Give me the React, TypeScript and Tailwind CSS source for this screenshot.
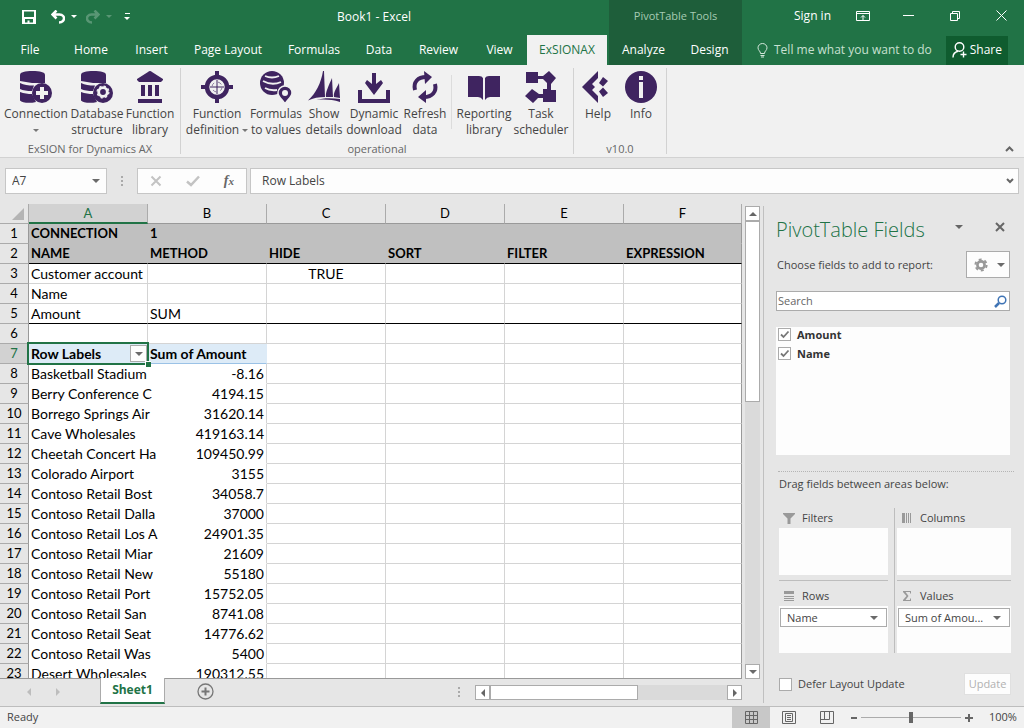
import React from 'react';

const Caret = ({ className = 'border-t-[#6a6a6a]' }: { className?: string }) => (
  <span className={`inline-block shrink-0 w-0 h-0 border-x-4 border-x-transparent border-t-4 ${className}`} />
);

const Stack = () => (
  <>
    <path d="M0 4C0 1 5 0 12.500 0S25 1 25 4v8H12L0 10z" fill="#3f2460" />
    <path d="M0 12c4 2 8 2.500 14 2.500L12 20C7 20 3 19.500 0 18z" fill="#3f2460" />
    <path d="M0 21c4 1.500 8 2 12 2l4 8c-6 1.500-14 1-16-1.500z" fill="#3f2460" />
    <circle cx="22" cy="22" r="10" fill="#3f2460" />
  </>
);

const icons: Record<string, React.ReactNode> = {
  connection: (
    <>
      <Stack />
      <path d="M20 16h4v4h4v4h-4v4h-4v-4h-4v-4h4z" fill="#f1f1f1" />
    </>
  ),
  database: (
    <>
      <Stack />
      <circle cx="22" cy="21" r="4.300" fill="none" stroke="#f1f1f1" strokeWidth="2.800" />
      <circle cx="22" cy="21" r="5.900" fill="none" stroke="#f1f1f1" strokeWidth="1.200" strokeDasharray="2.300 2.330" />
    </>
  ),
  temple: (
    <path
      d="M14 1q2-2 4 0l11 7v1l-2 2H5L3 9V8zM7 14h4v11H7zM14 14h4v11h-4zM21 14h4v11h-4zM4 28h24v4H4z"
      fill="#3f2460"
    />
  ),
  target: (
    <>
      <circle cx="16" cy="16" r="10" fill="#f1f1f1" stroke="#3f2460" strokeWidth="4.500" />
      <path d="M14 0h4v7h-4zM14 25h4v7h-4zM0 14h7v4H0zM25 14h7v4h-7z" fill="#3f2460" />
      <path d="M16 9v14M9 16h14" stroke="#3f2460" strokeWidth="1" />
      <circle cx="16" cy="16" r="5" fill="none" stroke="#8c7d9e" strokeWidth="1" strokeDasharray="4 4" />
    </>
  ),
  globe: (
    <>
      <circle cx="12" cy="12" r="12" fill="#3f2460" />
      <path d="M5 5q7 3 14 0M3 10q9 5 18 1M5 17q5 3 12 2" fill="none" stroke="#f1f1f1" strokeWidth="1.800" />
      <path
        d="M25 15a7 7 0 0 0-7 7c0 4 5 7 7 11 2-4 7-7 7-11a7 7 0 0 0-7-7z"
        fill="#3f2460"
        stroke="#f1f1f1"
        strokeWidth="1.500"
      />
      <circle cx="25" cy="22" r="3" fill="#f1f1f1" />
    </>
  ),
  sails: (
    <path
      d="M15 0h1l1 26C11 26 5 27 0 29.500 8 22 13 12 15 0zM24 7l1 19-7 0C17 22 21 14 24 7zM31 12l1 15-6-1C25 21 29 17 31 12zM8 29c8-2.500 16-2 24-1v3c-8-2.500-16-3-24-2z"
      fill="#3f2460"
    />
  ),
  download: (
    <path d="M14 2h4v11l5-4 2 3-9 12-9-12 2-3 5 4zM0 19h4v9h24v-9h4v13H0z" fill="#3f2460" />
  ),
  refresh: (
    <>
      <path d="M6 19C4 11 9 6 17 6M26 13c2 8-3 13-11 13" fill="none" stroke="#3f2460" strokeWidth="4" />
      <path d="M15 0l8 6-7 7zM17 19l-8 7 8 6z" fill="#3f2460" />
    </>
  ),
  book: (
    <path d="M0 5h11q3 0 4 2v22q-2-3-5-3H0zM32 5H21q-3 0-4 2v22q2-3 5-3h10z" fill="#3f2460" />
  ),
  tasks: (
    <path
      d="M1 1h12v4h5l6-5 7 7-5 6v6h5v12H18v-4h-5l-5 5-8-7 7-7 7 5h4v-5h4v-6l-4-4h-5v4H1z"
      fill="#3f2460"
    />
  ),
  help: (
    <path
      d="M16 0v7l-6 6 3 3-3 3 6 6v7L0 16zM21 6l5 4-5 5.500-4-3.500zM21 16.500l5 5.500-5 4-4-5.500z"
      fill="#3f2460"
    />
  ),
  info: (
    <>
      <circle cx="16" cy="16" r="16" fill="#3f2460" />
      <path d="M14 5h4v4h-4zM14 11h4v16h-4z" fill="#f1f1f1" />
    </>
  ),
};

interface RibbonButtonProps {
  icon: string;
  lines: string[];
  className: string;
  caret?: boolean;
}

const RibbonButton = ({ icon, lines, className, caret }: RibbonButtonProps) => (
  <button className={`flex flex-col items-center shrink-0 whitespace-nowrap text-xs leading-4 text-[#444] ${className}`}>
    <svg viewBox="0 0 32 32" className="w-8 h-8 mb-[3px]">{icons[icon]}</svg>
    <span>{lines[0]}</span>
    <span className="flex items-center gap-[3px] h-4">
      {lines[1]}
      {caret && <span className="w-0 h-0 border-x-3 border-x-transparent border-t-3 border-t-[#777]" />}
    </span>
  </button>
);

const RibbonGroup = ({ label, children, className }: { label: string, children: React.ReactNode, className: string }) => (
  <div className={`flex flex-col justify-between my-[3px] pt-[3px] border-r border-[#d2d2d2] ${className}`}>
    <div className="flex">{children}</div>
    <div className="text-center text-[11px] leading-[10px] text-[#666]">{label}</div>
  </div>
);

const tabs = [
  { name: 'File', width: 'w-[60px]' },
  { name: 'Home', width: 'w-[62px]' },
  { name: 'Insert', width: 'w-[59px]' },
  { name: 'Page Layout', width: 'w-[94px]' },
  { name: 'Formulas', width: 'w-[78px]' },
  { name: 'Data', width: 'w-[52px]' },
  { name: 'Review', width: 'w-[67px]' },
  { name: 'View', width: 'w-[55px]' },
];

const TitleBar = () => (
  <header className="flex h-[65px] shrink-0 bg-[#217346] text-white text-xs whitespace-nowrap">
    <div className="flex flex-col w-[609px] shrink-0">
      <div className="flex items-center h-[35px] pb-0.5 pl-[22px]">
        <button aria-label="Save">
          <svg viewBox="0 0 14 14" className="w-3.5 h-3.5">
            <path d="M0 0h14v14H0zM2 1.500V7h10V1.500zM3 9v3.500h2.500V10.500h2v2H11V9z" fill="#fff" fillRule="evenodd" />
          </svg>
        </button>
        <button aria-label="Undo" className="flex items-center gap-1.5 ml-[15px]">
          <svg viewBox="0 0 14 14" className="w-3.5 h-3.5">
            <path d="M5.500.5L1.500 4.500l4 4M2 4.500h6.500C12 4.500 13 7 13 8.500S11.500 12.500 8 12.500" fill="none" stroke="#fff" strokeWidth="2.500" />
          </svg>
          <span className="w-0 h-0 border-x-3 border-x-transparent border-t-3 border-t-white" />
        </button>
        <button aria-label="Redo" className="flex items-center gap-1.5 ml-[9px] opacity-25">
          <svg viewBox="0 0 14 14" className="w-3.5 h-3.5">
            <path d="M8.500.5l4 4-4 4M12 4.500H5.500C2 4.500 1 7 1 8.500S2.500 12.500 6 12.500" fill="none" stroke="#fff" strokeWidth="2.500" />
          </svg>
          <span className="w-0 h-0 border-x-3 border-x-transparent border-t-3 border-t-white" />
        </button>
        <button aria-label="Customize toolbar" className="flex flex-col items-center gap-[3px] ml-3">
          <span className="w-[5px] h-px bg-white" />
          <span className="w-0 h-0 border-x-3 border-x-transparent border-t-3 border-t-white" />
        </button>
        <h1 className="w-[200px] ml-auto mr-[135px] text-center">Book1 - Excel</h1>
      </div>
      <nav className="flex h-[30px]">
        {tabs.map(tab => (
          <button key={tab.name} className={`shrink-0 ${tab.width}`}>{tab.name}</button>
        ))}
        <button className="w-20 shrink-0 bg-[#f1f1f1] text-[#217346]">ExSIONAX</button>
      </nav>
    </div>
    <div className="flex flex-col w-[133px] shrink-0 bg-[#1e5e3a]">
      <div className="flex items-center justify-center h-[35px] pb-0.5 text-[11px] text-[#a6cbb3]">PivotTable Tools</div>
      <div className="flex h-[30px] pl-px">
        <button className="w-[67px]">Analyze</button>
        <button className="w-[65px]">Design</button>
      </div>
    </div>
    <div className="flex flex-col flex-1 min-w-0">
      <div className="flex items-center justify-end h-[35px] pb-1 pr-[17px]">
        <button className="mr-[25px]">Sign in</button>
        <button aria-label="Ribbon display options" className="mr-[33px]">
          <svg viewBox="0 0 14 12" className="w-3.5 h-3" fill="none" stroke="#fff">
            <path d="M.5 1.500h13v9H.5zM.5 3.500h13M7 10V5.500M5 7.500l2-2 2 2" />
          </svg>
        </button>
        <button aria-label="Minimize" className="w-[11px] h-px mr-9 bg-white" />
        <button aria-label="Restore" className="mr-9">
          <svg viewBox="0 0 10 10" className="w-2.5 h-2.5" fill="none" stroke="#fff">
            <path d="M.5 2.500h7v7h-7zM2.500 2.500v-2h7v7h-2" />
          </svg>
        </button>
        <button aria-label="Close">
          <svg viewBox="0 0 11 11" className="w-[11px] h-[11px]" stroke="#fff">
            <path d="M.5.5l10 10M10.500.5l-10 10" />
          </svg>
        </button>
      </div>
      <div className="flex items-center h-[30px] pl-[15px] pr-4">
        <svg viewBox="0 0 11 15" className="w-[11px] h-[15px] mr-1.5" fill="none" stroke="#d5e8dc">
          <path d="M3.500 10.500C3.500 8 1 7.500 1 4.800a4.500 4.300 0 0 1 9 0C10 7.500 7.500 8 7.500 10.500zM3.500 12.500h4M4 14h3" />
        </svg>
        <button className="text-[#c8e0d1]">Tell me what you want to do</button>
        <button className="flex items-center gap-[3px] h-[29px] px-1.5 ml-auto bg-[#0f5c2f]">
          <svg viewBox="0 0 15 16" className="w-[15px] h-4" fill="none" stroke="#fff" strokeWidth="1.400">
            <circle cx="7.500" cy="5" r="4.300" />
            <path d="M1 15.500C1 12 3 10 6 9.300M11.500 9.500v6M8.500 12.500h6" />
          </svg>
          Share
        </button>
      </div>
    </div>
  </header>
);

const Ribbon = () => (
  <section className="flex h-[93px] shrink-0 bg-[#f1f1f1] border-b border-[#d2d2d2]">
    <RibbonGroup label="ExSION for Dynamics AX" className="w-[181px]">
      <RibbonButton icon="connection" lines={['Connection', '']} className="w-16 ml-1" caret />
      <RibbonButton icon="database" lines={['Database', 'structure']} className="w-[58px]" />
      <RibbonButton icon="temple" lines={['Function', 'library']} className="w-12" />
    </RibbonGroup>
    <RibbonGroup label="operational" className="w-[393px]">
      <RibbonButton icon="target" lines={['Function', 'definition']} className="w-[60px] ml-1.5" caret />
      <RibbonButton icon="globe" lines={['Formulas', 'to values']} className="w-[58px]" />
      <RibbonButton icon="sails" lines={['Show', 'details']} className="w-[38px]" />
      <RibbonButton icon="download" lines={['Dynamic', 'download']} className="w-[62px]" />
      <RibbonButton icon="refresh" lines={['Refresh', 'data']} className="w-10" />
      <span className="w-px h-[54px] ml-1.5 mr-[5px] mt-1 bg-[#dcdcdc]" />
      <RibbonButton icon="book" lines={['Reporting', 'library']} className="w-[54px]" />
      <RibbonButton icon="tasks" lines={['Task', 'scheduler']} className="w-[60px]" />
    </RibbonGroup>
    <RibbonGroup label="v10.0" className="w-[93px]">
      <RibbonButton icon="help" lines={['Help', '']} className="w-11 ml-0.5" />
      <RibbonButton icon="info" lines={['Info', '']} className="w-[42px]" />
    </RibbonGroup>
    <button aria-label="Collapse the ribbon" className="self-end ml-auto mr-2.5 mb-[5px]">
      <svg viewBox="0 0 9 6" className="w-[9px] h-1.5" fill="none" stroke="#666" strokeWidth="2">
        <path d="M1 5l3.500-3.500L8 5" />
      </svg>
    </button>
  </section>
);

const Dots = () => (
  <span className="flex flex-col gap-0.5">
    <i className="w-0.5 h-0.5 bg-[#aaa]" />
    <i className="w-0.5 h-0.5 bg-[#aaa]" />
    <i className="w-0.5 h-0.5 bg-[#aaa]" />
  </span>
);

const FormulaBar = () => (
  <section className="flex items-center h-[46px] shrink-0 px-[5px] text-xs text-[#444]">
    <div className="flex items-center w-[102px] h-[26px] px-1.5 bg-[#fdfdfd] border border-[#c6c6c6]">
      <input aria-label="Name box" defaultValue="A7" className="flex-1 min-w-0 outline-none" />
      <Caret />
    </div>
    <div className="flex justify-center w-[30px]"><Dots /></div>
    <div className="flex items-center justify-between w-[110px] h-[26px] px-3 bg-[#fdfdfd] border border-[#c6c6c6]">
      <button aria-label="Cancel">
        <svg viewBox="0 0 12 12" className="w-3 h-3" stroke="#c3c3c3" strokeWidth="2">
          <path d="M1.500 1.500l9 9M10.500 1.500l-9 9" />
        </svg>
      </button>
      <button aria-label="Enter">
        <svg viewBox="0 0 14 12" className="w-3.5 h-3" fill="none" stroke="#c3c3c3" strokeWidth="2.500">
          <path d="M1 6.500L5 10l8-8.500" />
        </svg>
      </button>
      <button aria-label="Insert function" className="[font-family:'Liberation_Serif',serif] italic font-bold text-sm leading-4 text-[#666]">
        f<span className="text-[11px]">x</span>
      </button>
    </div>
    <div className="flex items-center flex-1 h-[26px] ml-[3px] pl-[11px] pr-1 bg-[#fdfdfd] border border-[#c6c6c6]">
      <input aria-label="Formula" defaultValue="Row Labels" className="flex-1 min-w-0 outline-none" />
      <svg viewBox="0 0 8 6" className="w-2 h-1.5" fill="none" stroke="#666" strokeWidth="2">
        <path d="M1 1l3 3 3-3" />
      </svg>
    </div>
  </section>
);

const columns = ['A', 'B', 'C', 'D', 'E', 'F'];

const rows: string[][] = [
  ['CONNECTION', '1'],
  ['NAME', 'METHOD', 'HIDE', 'SORT', 'FILTER', 'EXPRESSION'],
  ['Customer account', '', 'TRUE'],
  ['Name'],
  ['Amount', 'SUM'],
  [],
  ['Row Labels', 'Sum of Amount'],
  ['Basketball Stadium', '-8.16'],
  ['Berry Conference C', '4194.15'],
  ['Borrego Springs Air', '31620.14'],
  ['Cave Wholesales', '419163.14'],
  ['Cheetah Concert Ha', '109450.99'],
  ['Colorado Airport', '3155'],
  ['Contoso Retail Bost', '34058.7'],
  ['Contoso Retail Dalla', '37000'],
  ['Contoso Retail Los A', '24901.35'],
  ['Contoso Retail Miar', '21609'],
  ['Contoso Retail New', '55180'],
  ['Contoso Retail Port', '15752.05'],
  ['Contoso Retail San', '8741.08'],
  ['Contoso Retail Seat', '14776.62'],
  ['Contoso Retail Was', '5400'],
  ['Desert Wholesales', '190312.55'],
];

const cellStyle = (row: number, col: number) => {
  const right = col === 5 ? 'border-r-[#999]' : 'border-r-[#d4d4d4]';
  if (row === 1) return `font-bold text-[13px] bg-[#c0c0c0] border-b-[#c0c0c0] ${col === 5 ? right : 'border-r-[#c0c0c0]'}`;
  if (row === 2) return `font-bold text-[13px] bg-[#c0c0c0] border-b-black ${col === 5 ? right : 'border-r-[#c0c0c0]'}`;
  if (row === 5) return `bg-white border-b-black ${right}`;
  if (row === 7 && col < 2) return 'font-bold bg-[#ddebf7] border-b-[#9bc2e6] border-r-[#ddebf7]';
  if (row > 7 && col < 2) return `bg-white border-b-white ${col === 0 ? 'border-r-white' : right}`;
  return `bg-white border-b-[#d4d4d4] ${right}`;
};

const align = (row: number, col: number) => {
  if (row > 7 && col === 1) return 'text-right';
  if (row === 3 && col === 2) return 'text-center';
  return 'text-left';
};

const Sheet = () => (
  <div className="flex-1 min-w-0 overflow-hidden">
    <table className="w-full table-fixed border-separate border-spacing-0 text-sm leading-[19px] text-black [font-family:'Lato',sans-serif]">
      <colgroup>
        <col className="w-[29px]" />
        {columns.map(c => <col key={c} className={c === 'F' ? '' : 'w-[119px]'} />)}
      </colgroup>
      <thead>
        <tr className="h-5">
          <th className="border-r border-b border-[#ababab] p-0">
            <svg viewBox="0 0 12 12" className="w-3 h-3 ml-auto mr-1"><path d="M12 0v12H0z" fill="#b4b4b4" /></svg>
          </th>
          {columns.map(c => (
            <th
              key={c}
              className={`p-0 font-normal text-[13px] border-r border-r-[#ababab] ${c === 'A' ? 'bg-[#d2d2d2] text-[#217346] border-b-2 border-b-[#217346] leading-[18px]' : 'border-b border-b-[#999]'}`}
            >
              {c}
            </th>
          ))}
        </tr>
      </thead>
      <tbody>
        {rows.map((row, i) => {
          const n = i + 1;
          return (
            <tr key={n} className="h-5">
              <th className={`p-0 font-normal text-[13px] border-r border-r-[#999] border-b border-b-[#ababab] ${n === 7 ? 'bg-[#d2d2d2] text-[#217346]' : ''}`}>{n}</th>
              {columns.map((c, col) => (
                <td key={c} className={`p-0 border-r border-b ${cellStyle(n, col)} ${n === 7 && col === 0 ? 'relative' : ''}`}>
                  <div className={`px-0.5 h-[19px] whitespace-nowrap ${align(n, col)}`}>{row[col]}</div>
                  {n === 7 && col === 0 && (
                    <>
                      <span className="absolute -inset-0.5 border-2 border-[#217346]" />
                      <button aria-label="Filter row labels" className="absolute right-0 top-px flex items-center justify-center w-[17px] h-[17px] bg-[#fdfdfd] border border-[#ababab]">
                        <Caret />
                      </button>
                      <span className="absolute -right-1 -bottom-1 w-1.5 h-1.5 bg-[#217346] border-t border-l border-white" />
                    </>
                  )}
                </td>
              ))}
            </tr>
          );
        })}
      </tbody>
    </table>
  </div>
);

const VerticalScroll = () => (
  <div className="flex flex-col w-[15px] mt-0.5 -mb-px mx-[3px] shrink-0 bg-[#dadada]">
    <button aria-label="Scroll up" className="flex items-center justify-center h-[15px] bg-white border border-[#ababab]">
      <span className="w-0 h-0 border-x-4 border-x-transparent border-b-4 border-b-[#666]" />
    </button>
    <div className="h-[181px] bg-white border border-[#ababab]" />
    <button aria-label="Scroll down" className="flex items-center justify-center h-[15px] mt-auto bg-white border border-[#ababab]">
      <Caret />
    </button>
  </div>
);

const SheetTabs = () => (
  <div className="flex h-7 shrink-0 items-start">
    <div className="flex flex-1 h-full mr-[21px] border-t border-[#999]">
      <button aria-label="Previous sheet" className="w-0 h-0 ml-[27px] mt-[9px] border-y-4 border-y-transparent border-r-4 border-r-[#bdbdbd]" />
      <button aria-label="Next sheet" className="w-0 h-0 ml-[25px] mt-[9px] border-y-4 border-y-transparent border-l-4 border-l-[#bdbdbd]" />
      <button className="relative -mt-px ml-10 w-[65px] h-[26px] bg-white border-x border-x-[#ababab] border-b-2 border-b-[#217346] text-xs font-bold text-[#217346]">Sheet1</button>
      <button aria-label="New sheet" className="self-start mt-1 ml-8">
        <svg viewBox="0 0 17 17" className="w-[17px] h-[17px]" fill="none" stroke="#777">
          <circle cx="8.500" cy="8.500" r="7.500" strokeWidth="1.300" />
          <path d="M8.500 4.500v8M4.500 8.500h8" strokeWidth="2" />
        </svg>
      </button>
      <div className="ml-auto mr-[15px] mt-2"><Dots /></div>
      <div className="flex w-[267px] h-[15px] mt-1.5 bg-[#dadada]">
        <button aria-label="Scroll left" className="flex items-center justify-center w-[15px] bg-white border border-[#ababab]">
          <span className="w-0 h-0 border-y-4 border-y-transparent border-r-4 border-r-[#666]" />
        </button>
        <div className="w-[148px] bg-white border border-[#ababab]" />
        <button aria-label="Scroll right" className="flex items-center justify-center w-[15px] ml-auto bg-white border border-[#ababab]">
          <span className="w-0 h-0 border-y-4 border-y-transparent border-l-4 border-l-[#666]" />
        </button>
      </div>
    </div>
  </div>
);

const CheckRow = ({ label }: { label: string }) => (
  <label className="flex items-center gap-1.5 h-[15px] font-bold">
    <span className="relative flex">
      <input type="checkbox" defaultChecked className="appearance-none w-[13px] h-[13px] bg-white border border-[#ababab]" />
      <svg viewBox="0 0 13 13" className="absolute inset-0 w-[13px] h-[13px] pointer-events-none" fill="none" stroke="#777" strokeWidth="1.800">
        <path d="M3 6.500L5.500 9 10.500 3.500" />
      </svg>
    </span>
    {label}
  </label>
);

interface AreaProps {
  title: string;
  icon: React.ReactNode;
  field?: string;
  className?: string;
}

const Area = ({ title, icon, field, className = '' }: AreaProps) => (
  <div className={`flex flex-col ${className}`}>
    <div className="flex items-center gap-[7px] h-[19px] pl-1">
      <svg viewBox="0 0 12 12" className="w-3 h-3" fill="#999">{icon}</svg>
      <span>{title}</span>
    </div>
    <div className="h-[47px] px-px py-0.5 mt-px bg-[#fdfdfd]">
      {field && (
        <button className="flex items-center justify-between w-full h-[19px] pl-1.5 pr-2 bg-white border border-[#ababab]">
          <span>{field}</span>
          <Caret />
        </button>
      )}
    </div>
  </div>
);

const FieldsPane = () => (
  <aside className="flex flex-col w-[261px] shrink-0 mt-0.5 mb-[3px] pl-3 pr-3.5 border-l border-[#c0c0c0] text-[11px] leading-4 text-[#444]">
    <div className="flex items-center pt-3 pr-[5px] h-9">
      <h2 className="text-xl leading-6 font-light text-[#217346]">PivotTable Fields</h2>
      <span className="flex ml-auto mb-1.5"><Caret className="border-t-[#666]" /></span>
      <button aria-label="Close pane" className="ml-8 mb-1.5">
        <svg viewBox="0 0 10 10" className="w-2.5 h-2.5" stroke="#666" strokeWidth="2">
          <path d="M1 1l8 8M9 1L1 9" />
        </svg>
      </button>
    </div>
    <div className="flex items-center justify-between mt-[9px] pl-px">
      <span>Choose fields to add to report:</span>
      <button aria-label="Pane options" className="flex items-center justify-end gap-[9px] w-11 h-[27px] pr-1 bg-[#fdfdfd] border border-[#ababab]">
        <svg viewBox="0 0 14 14" className="w-3.5 h-3.5" fill="none" stroke="#999">
          <circle cx="7" cy="7" r="3.600" strokeWidth="2.600" />
          <circle cx="7" cy="7" r="5.600" strokeWidth="2" strokeDasharray="2.900 2.960" />
        </svg>
        <Caret />
      </button>
    </div>
    <div className="flex items-center mt-[13px] h-5 px-px bg-white border border-[#ababab]">
      <input aria-label="Search" placeholder="Search" className="flex-1 min-w-0 outline-none placeholder:text-[#666]" />
      <svg viewBox="0 0 13 13" className="w-[13px] h-[13px] mr-px" fill="none" stroke="#3f74b5">
        <circle cx="8" cy="5" r="3.800" strokeWidth="1.500" />
        <path d="M5 8L1 12" strokeWidth="2.500" />
      </svg>
    </div>
    <div className="flex flex-col gap-1 h-32 mt-4 pl-0.5 bg-[#fdfdfd] text-[#333]">
      <CheckRow label="Amount" />
      <CheckRow label="Name" />
    </div>
    <div className="mt-4 ml-0.5 -mr-1 border-t border-dotted border-[#b5b5b5]" />
    <div className="mt-1 pl-[3px]">Drag fields between areas below:</div>
    <div className="flex mt-4 ml-[3px] -mr-px">
      <div className="w-[109px] mr-1.5 divide-y divide-[#bdbdbd]">
        <Area title="Filters" icon={<path d="M0 1h12v1L7.500 6.500V12h-3V6.500L0 2z" />} className="pb-[5px]" />
        <Area title="Rows" icon={<path d="M1 1h10v3H1zM1 6h10v1H1zM1 8h10v1H1zM1 10h10v1H1z" />} field="Name" className="pt-[5px]" />
      </div>
      <div className="flex-1 pl-0.5 border-l border-[#bdbdbd] divide-y divide-[#bdbdbd]">
        <Area title="Columns" icon={<path d="M1 1h3v10H1zM5 1h1v10H5zM7 1h1v10H7zM9 1h1v10H9z" />} className="pb-[5px]" />
        <Area title="Values" icon={<path d="M2 1h8v2.500H9V2H4.500l3 4-3 4H9V8.500h1V11H2v-1l3.500-4L2 2z" />} field="Sum of Amou..." className="pt-[5px]" />
      </div>
    </div>
    <div className="flex items-center justify-between mt-5 pl-[3px] -mr-px">
      <label className="flex items-center gap-1.5">
        <input type="checkbox" className="appearance-none w-[13px] h-[13px] bg-white border border-[#ababab]" />
        Defer Layout Update
      </label>
      <button disabled className="w-[47px] h-[22px] bg-[#fdfdfd] border border-[#e0e0e0] text-[#b1b1b1]">Update</button>
    </div>
  </aside>
);

const StatusBar = () => (
  <footer className="flex items-center h-[22px] shrink-0 pl-[7px] pr-2 bg-[#f1f1f1] border-t border-[#bdbdbd] text-[11px] text-[#444]">
    <span>Ready</span>
    <button aria-label="Normal view" className="flex items-center justify-center w-[38px] h-full ml-auto bg-[#c8c8c8]">
      <svg viewBox="0 0 13 13" className="w-[13px] h-[13px]" fill="none" stroke="#666">
        <path d="M.5.5h12v12H.5zM4.500.5v12M8.500.5v12M.5 4.500h12M.5 8.500h12" />
      </svg>
    </button>
    <button aria-label="Page layout view" className="ml-3">
      <svg viewBox="0 0 14 13" className="w-3.5 h-[13px]" fill="none" stroke="#666">
        <path d="M.5.5h13v12H.5zM3.500 2.500h7v8h-7zM5 4.500h4M5 6.500h4M5 8.500h4" />
      </svg>
    </button>
    <button aria-label="Page break view" className="ml-6">
      <svg viewBox="0 0 14 13" className="w-3.5 h-[13px]" fill="none" stroke="#666">
        <path d="M.5.5h13v12H.5zM4.500.5v8M9.500.5v8M.5 8.500h9" />
      </svg>
    </button>
    <button aria-label="Zoom out" className="w-1.5 h-0.5 ml-[17px] bg-[#666]" />
    <input
      type="range"
      aria-label="Zoom"
      className="appearance-none w-[100px] h-3 mx-1 bg-transparent [&::-webkit-slider-runnable-track]:h-px [&::-webkit-slider-runnable-track]:bg-[#ababab] [&::-webkit-slider-thumb]:appearance-none [&::-webkit-slider-thumb]:w-1 [&::-webkit-slider-thumb]:h-[11px] [&::-webkit-slider-thumb]:-mt-[5px] [&::-webkit-slider-thumb]:bg-[#666]"
    />
    <button aria-label="Zoom in">
      <svg viewBox="0 0 8 8" className="w-2 h-2" stroke="#666" strokeWidth="2"><path d="M4 0v8M0 4h8" /></svg>
    </button>
    <span className="w-[27px] ml-4">100%</span>
  </footer>
);

export default function App() {
  return (
    <div className="flex flex-col h-screen bg-[#e6e6e6] [font-family:'Open_Sans','Noto_Sans',sans-serif]">
      <TitleBar />
      <Ribbon />
      <FormulaBar />
      <main className="flex flex-1 min-h-0">
        <div className="flex flex-col flex-1 min-w-0">
          <div className="flex flex-1 min-h-0">
            <Sheet />
            <VerticalScroll />
          </div>
          <SheetTabs />
        </div>
        <FieldsPane />
      </main>
      <StatusBar />
    </div>
  );
}
